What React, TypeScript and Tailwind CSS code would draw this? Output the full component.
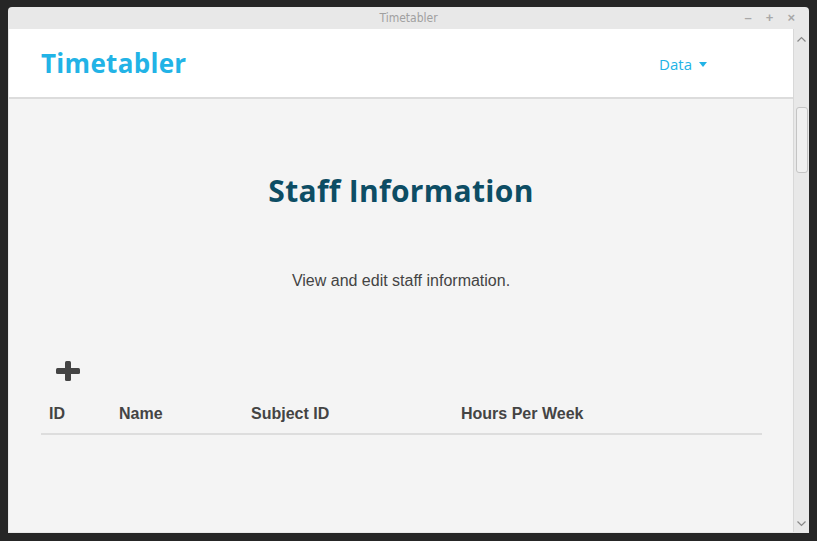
import React from "react";

export default function App() {
  return (
    <div className="w-[817px] h-[541px] bg-[#262626] pl-[8px] pt-[7px] overflow-hidden" style={{ fontFamily: "'Liberation Sans', Arial, sans-serif" }}>
      <div className="w-[801px] h-[526px] flex flex-col bg-[#e8e8e8] rounded-t-[4px] overflow-hidden">
        {/* title bar */}
        <div className="h-[22px] relative flex items-center justify-center shrink-0">
          <span className="text-[12px] text-[#a0a0a0]" style={{ fontFamily: "'DejaVu Sans Condensed', 'DejaVu Sans', sans-serif" }}>Timetabler</span>
          <div className="absolute right-[14px] top-0 h-full flex items-center gap-[14px] text-[#a8a8a8] text-[13px] font-bold">
            <span>–</span>
            <span>+</span>
            <span>×</span>
          </div>
        </div>
        <div className="flex flex-1 min-h-0 pl-[1px] pb-[1px]">
          {/* content */}
          <div className="flex-1 bg-[#f4f4f4] flex flex-col">
            <div className="h-[70px] bg-white border-b-2 border-[#dcdcdc] flex items-center justify-between pl-[32px] pr-[86px] shrink-0">
              <span className="text-[#22b3e6] text-[26px] font-bold tracking-[0.3px]" style={{ fontFamily: "'Open Sans', Lato, sans-serif" }}>Timetabler</span>
              <span className="text-[#22b3e6] text-[15px] flex items-center gap-[7px] mt-[2px]" style={{ fontFamily: "'Open Sans', Lato, sans-serif" }}>
                Data
                <svg width="8" height="5" viewBox="0 0 8 5"><path d="M0 0h8L4 5z" fill="#22b3e6" /></svg>
              </span>
            </div>
            <div className="flex flex-col items-center">
              <h1 className="mt-[74px] text-[30px] font-bold text-[#0d4d64] leading-[36px] tracking-[0.3px]" style={{ fontFamily: "'Open Sans', Lato, sans-serif" }}>Staff Information</h1>
              <p className="mt-[60px] text-[16px] text-[#444]">View and edit staff information.</p>
            </div>
            <div className="ml-[32px] mr-[31px] mt-[66px]">
              <div className="pl-[15px] h-[24px] flex items-center">
                <svg width="24" height="20" viewBox="0 0 24 20">
                  <rect x="9" y="0" width="6" height="20" rx="1.5" fill="#444" />
                  <rect x="0" y="7" width="24" height="6" rx="1.5" fill="#444" />
                </svg>
              </div>
              <div className="mt-[19px] flex text-[16px] font-bold text-[#444] border-b-2 border-[#dddddd] pb-[7px]">
                <div className="w-[70px] pl-[8px]">ID</div>
                <div className="w-[132px] pl-[8px]">Name</div>
                <div className="w-[210px] pl-[8px]">Subject ID</div>
                <div className="flex-1 pl-[8px]">Hours Per Week</div>
              </div>
            </div>
          </div>
          {/* scrollbar */}
          <div className="w-[16px] bg-[#e8e8e8] border-l border-[#d8d8d8] flex flex-col items-center relative">
            <svg className="mt-[7px]" width="9" height="6" viewBox="0 0 9 6"><path d="M0.5 5.5L4.5 1.5L8.5 5.5" stroke="#888" strokeWidth="1.2" fill="none" /></svg>
            <div className="mt-[65px] w-[12px] h-[66px] rounded-[3px] border border-[#c4c4c4] bg-[#f0f0f0]" />
            <div className="flex-1" />
            <svg className="mb-[5px]" width="9" height="6" viewBox="0 0 9 6"><path d="M0.5 0.5L4.5 4.5L8.5 0.5" stroke="#888" strokeWidth="1.2" fill="none" /></svg>
          </div>
        </div>
      </div>
    </div>
  );
}
